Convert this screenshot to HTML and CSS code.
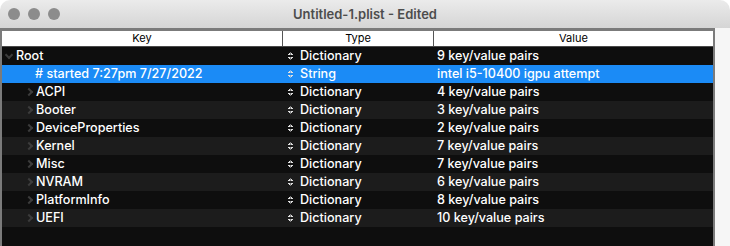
FILE: index.html
```html
<!DOCTYPE html>
<html>
<head>
    <meta charset="UTF-8">
    <title>Untitled-1.plist - Edited</title>
    <link rel="stylesheet" href="styles.css">
</head>
<body>
    <div class="window">
        <div class="titlebar">
            <div class="lights">
                <span class="light"></span>
                <span class="light"></span>
                <span class="light"></span>
            </div>
            <div class="title">Untitled-1.plist - Edited</div>
        </div>

        <div class="content">
            <div class="table">
                <div class="head">
                    <div class="col key">Key</div>
                    <div class="col type">Type</div>
                    <div class="col value">Value</div>
                </div>

                <div class="rows">
                    <div class="row">
                        <div class="col key"><span class="arrow open"></span>Root</div>
                        <div class="col type"><span class="updown"></span>Dictionary</div>
                        <div class="col value">9 key/value pairs</div>
                    </div>
                    <div class="row selected">
                        <div class="col key child">&#35; started 7:27pm 7/27/2022</div>
                        <div class="col type"><span class="updown"></span>String</div>
                        <div class="col value">intel i5-10400 igpu attempt</div>
                    </div>
                    <div class="row">
                        <div class="col key child"><span class="arrow"></span>ACPI</div>
                        <div class="col type"><span class="updown"></span>Dictionary</div>
                        <div class="col value">4 key/value pairs</div>
                    </div>
                    <div class="row">
                        <div class="col key child"><span class="arrow"></span>Booter</div>
                        <div class="col type"><span class="updown"></span>Dictionary</div>
                        <div class="col value">3 key/value pairs</div>
                    </div>
                    <div class="row">
                        <div class="col key child"><span class="arrow"></span>DeviceProperties</div>
                        <div class="col type"><span class="updown"></span>Dictionary</div>
                        <div class="col value">2 key/value pairs</div>
                    </div>
                    <div class="row">
                        <div class="col key child"><span class="arrow"></span>Kernel</div>
                        <div class="col type"><span class="updown"></span>Dictionary</div>
                        <div class="col value">7 key/value pairs</div>
                    </div>
                    <div class="row">
                        <div class="col key child"><span class="arrow"></span>Misc</div>
                        <div class="col type"><span class="updown"></span>Dictionary</div>
                        <div class="col value">7 key/value pairs</div>
                    </div>
                    <div class="row">
                        <div class="col key child"><span class="arrow"></span>NVRAM</div>
                        <div class="col type"><span class="updown"></span>Dictionary</div>
                        <div class="col value">6 key/value pairs</div>
                    </div>
                    <div class="row">
                        <div class="col key child"><span class="arrow"></span>PlatformInfo</div>
                        <div class="col type"><span class="updown"></span>Dictionary</div>
                        <div class="col value">8 key/value pairs</div>
                    </div>
                    <div class="row">
                        <div class="col key child"><span class="arrow"></span>UEFI</div>
                        <div class="col type"><span class="updown"></span>Dictionary</div>
                        <div class="col value">10 key/value pairs</div>
                    </div>
                </div>
            </div>
            <div class="side"></div>
        </div>
    </div>
</body>
</html>
```

FILE: styles.css
```css
body {
    margin: 0;
    background: #ffffff;
    font-family: Inter, 'Liberation Sans', sans-serif;
}

.window {
    width: 730px;
    height: 246px;
    border-radius: 10px 10px 0 0;
    overflow: hidden;
    display: flex;
    flex-direction: column;
}

.titlebar {
    height: 28px;
    background: linear-gradient(#ebebeb, #d5d5d5);
    display: flex;
    align-items: center;
    flex-shrink: 0;
}

.lights {
    display: flex;
    gap: 8px;
    padding-left: 8px;
}

.light {
    width: 12px;
    height: 12px;
    border-radius: 50%;
    background: #8c8c8c;
}

.title {
    flex: 1;
    text-align: center;
    margin-right: 60px;
    font-size: 13px;
    font-weight: 600;
    color: #4d4d4d;
}

.content {
    flex: 1;
    display: flex;
    min-height: 0;
}

.table {
    width: 711px;
    border: 2px solid #7b7b7b;
    border-top-width: 3px;
    border-bottom: none;
    background: #0e0e0e;
    display: flex;
    flex-direction: column;
}

.side {
    flex: 1;
    background: #f6f6f6;
}

.head {
    display: flex;
    height: 15px;
    background: #ffffff;
    border-bottom: 1px solid #4a4a4a;
    font-size: 11px;
    line-height: 15px;
    color: #000000;
}

.head .col {
    text-align: center;
}

.head .key,
.head .type {
    border-right: 1px solid #555555;
}

.col {
    box-sizing: border-box;
    white-space: nowrap;
}

.key {
    width: 281px;
}

.type {
    width: 151px;
}

.value {
    flex: 1;
}

.row {
    display: flex;
    height: 18px;
    line-height: 18px;
    font-size: 12.6px;
    font-weight: 500;
    color: #ffffff;
}

.row:nth-child(even) {
    background: #1c1c1c;
}

.row.selected {
    background: #1b8bf6;
}

.row .key {
    display: flex;
    align-items: center;
    padding-left: 13px;
}

.row .key.child {
    padding-left: 33px;
}

.row .type {
    display: flex;
    align-items: center;
    padding-left: 5px;
}

.row .value {
    padding-left: 3px;
}

.arrow {
    width: 4px;
    height: 4px;
    border-right: 2px solid #3c3c3c;
    border-bottom: 2px solid #3c3c3c;
    transform: rotate(-45deg);
    margin-left: -9px;
    margin-right: 4px;
}

.arrow.open {
    transform: rotate(45deg);
    margin-top: -3px;
}

.updown {
    width: 5px;
    height: 8px;
    margin-right: 7px;
    background:
        linear-gradient(to bottom right, transparent 50%, #e0e0e0 50%) 0 0 / 2.5px 3px no-repeat,
        linear-gradient(to bottom left, transparent 50%, #e0e0e0 50%) 2.5px 0 / 2.5px 3px no-repeat,
        linear-gradient(to top right, transparent 50%, #e0e0e0 50%) 0 5px / 2.5px 3px no-repeat,
        linear-gradient(to top left, transparent 50%, #e0e0e0 50%) 2.5px 5px / 2.5px 3px no-repeat;
}
```
